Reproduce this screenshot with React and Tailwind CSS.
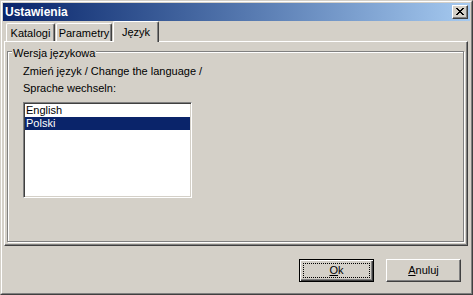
export default function App() {
  return (
    <div className="w-[473px] h-[295px] bg-[#d4d0c8] border border-t-[#d4d0c8] border-l-[#d4d0c8] border-r-[#404040] border-b-[#404040] font-['Liberation_Sans',Arial,sans-serif] text-[11px] leading-[13px] text-black select-none">
      <div className="h-full flex flex-col border border-t-white border-l-white border-r-[#808080] border-b-[#808080] p-px">
        {/* Title bar */}
        <div className="h-[18px] shrink-0 flex items-center justify-between pl-[2px] pr-[2px] bg-linear-to-r from-[#0a246a] to-[#a6caf0]">
          <span className="text-white font-bold text-[12px] leading-[14px]">Ustawienia</span>
          <div className="w-[16px] h-[14px] flex items-center justify-center bg-[#d4d0c8] border border-t-white border-l-white border-r-[#404040] border-b-[#404040] shadow-[inset_-1px_-1px_0_#808080]">
            <svg width="8" height="7" viewBox="0 0 8 7" shapeRendering="crispEdges" className="mb-px">
              <path
                fill="#000"
                d="M0 0h2v1H0zM6 0h2v1H6zM1 1h2v1H1zM5 1h2v1H5zM2 2h4v1H2zM3 3h2v1H3zM2 4h4v1H2zM1 5h2v1H1zM5 5h2v1H5zM0 6h2v1H0zM6 6h2v1H6z"
              />
            </svg>
          </div>
        </div>

        {/* Tabs */}
        <div className="h-[20px] shrink-0 flex items-end pl-[3px]">
          <div className="w-[49px] h-[18px] mr-px pt-[3px] text-center bg-[#d4d0c8] border-t border-l border-r border-t-white border-l-white border-r-[#404040] rounded-t-[2px] shadow-[inset_-1px_0_0_#808080]">
            Katalogi
          </div>
          <div className="w-[56px] h-[18px] mr-px pt-[3px] text-center bg-[#d4d0c8] border-t border-l border-r border-t-white border-l-white border-r-[#404040] rounded-t-[2px] shadow-[inset_-1px_0_0_#808080]">
            Parametry
          </div>
          <div className="relative z-10 w-[46px] h-[21px] -mb-px pt-[4px] text-center bg-[#d4d0c8] border-t border-l border-r border-t-white border-l-white border-r-[#404040] rounded-t-[2px] shadow-[inset_-1px_0_0_#808080]">
            Język
          </div>
        </div>

        {/* Panel */}
        <div className="flex-1 flex flex-col ml-px mr-[2px] border border-t-white border-l-white border-r-[#404040] border-b-[#404040] shadow-[inset_-1px_-1px_0_#808080] pt-[9px] pl-[2px] pr-[2px] pb-[2px]">
          <div className="relative flex-1 mr-px mb-px border border-[#808080] shadow-[inset_1px_1px_0_#fff,1px_1px_0_#fff] pl-[15px] pt-[11px]">
            <span className="absolute left-[4px] -top-[5px] px-px bg-[#d4d0c8]">Wersja językowa</span>
            <div className="leading-[17px]">
              <div>Zmień język / Change the language /</div>
              <div>Sprache wechseln:</div>
            </div>
            <div className="mt-[5px] w-[169px] h-[96px] bg-white border border-t-[#808080] border-l-[#808080] border-r-white border-b-white shadow-[inset_1px_1px_0_#404040,inset_-1px_-1px_0_#d4d0c8] p-px">
              <div className="h-[13px] pl-[1px]">English</div>
              <div className="h-[13px] pl-[1px] bg-[#0a246a] text-white">Polski</div>
            </div>
          </div>
        </div>

        {/* Buttons */}
        <div className="h-[46px] shrink-0 flex justify-end items-start gap-[12px] pt-[13px] pr-[9px]">
          <div className="relative w-[75px] h-[23px] flex items-center justify-center border border-black shadow-[inset_1px_1px_0_#fff,inset_-1px_-1px_0_#404040,inset_-2px_-2px_0_#808080]">
            <span><u className="underline-offset-[1px]">O</u>k</span>
            <div className="absolute inset-[3px] border border-dotted border-black"></div>
          </div>
          <div className="w-[75px] h-[23px] flex items-center justify-center border border-t-white border-l-white border-r-[#404040] border-b-[#404040] shadow-[inset_-1px_-1px_0_#808080]">
            <span><u className="underline-offset-[1px]">A</u>nuluj</span>
          </div>
        </div>
      </div>
    </div>
  );
}
